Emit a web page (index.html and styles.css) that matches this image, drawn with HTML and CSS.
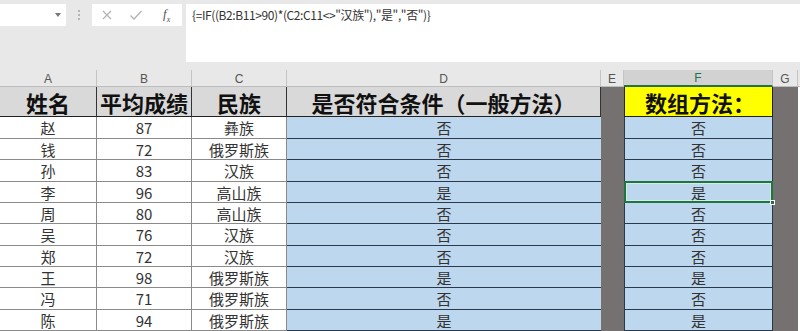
FILE: index.html
```html
<!DOCTYPE html>
<html lang="zh">
<head>
<meta charset="utf-8">
<link rel="stylesheet" href="styles.css">
</head>
<body>
<div class="top">
  <div class="namebox"><span class="caret"></span></div>
  <div class="dots"><i></i><i></i><i></i></div>
  <div class="fxbox">
    <svg class="ic" width="12" height="12" viewBox="0 0 12 12"><path d="M2 2 L10 10 M10 2 L2 10" stroke="#b3b3b3" stroke-width="1.3" fill="none"/></svg>
    <svg class="ic" width="14" height="12" viewBox="0 0 14 12"><path d="M1.5 6.5 L5 10 L12.5 2" stroke="#b3b3b3" stroke-width="1.3" fill="none"/></svg>
    <span class="fx">f<sub>x</sub></span>
  </div>
  <div class="formula">{=IF((B2:B11&gt;90)*(C2:C11&lt;&gt;"汉族"),"是","否")}</div>
</div>
<div class="sheet">
  <div class="ch">A</div><div class="ch">B</div><div class="ch">C</div><div class="ch">D</div><div class="ch">E</div><div class="ch sel">F</div><div class="ch">G</div><div class="ch last"></div>

  <div class="h">姓名</div><div class="h">平均成绩</div><div class="h">民族</div><div class="h">是否符合条件（一般方法）</div><div class="dk"></div><div class="y">数组方法：</div><div class="dk"></div><div class="rest"></div>

  <div class="w">赵</div><div class="w">87</div><div class="w">彝族</div><div class="b">否</div><div class="dk"></div><div class="b f">否</div><div class="dk"></div><div class="rest"></div>
  <div class="w">钱</div><div class="w">72</div><div class="w">俄罗斯族</div><div class="b">否</div><div class="dk"></div><div class="b f">否</div><div class="dk"></div><div class="rest"></div>
  <div class="w">孙</div><div class="w">83</div><div class="w">汉族</div><div class="b">否</div><div class="dk"></div><div class="b f">否</div><div class="dk"></div><div class="rest"></div>
  <div class="w">李</div><div class="w">96</div><div class="w">高山族</div><div class="b">是</div><div class="dk"></div><div class="b f active">是<span class="handle"></span></div><div class="dk"></div><div class="rest"></div>
  <div class="w">周</div><div class="w">80</div><div class="w">高山族</div><div class="b">否</div><div class="dk"></div><div class="b f">否</div><div class="dk"></div><div class="rest"></div>
  <div class="w">吴</div><div class="w">76</div><div class="w">汉族</div><div class="b">否</div><div class="dk"></div><div class="b f">否</div><div class="dk"></div><div class="rest"></div>
  <div class="w">郑</div><div class="w">72</div><div class="w">汉族</div><div class="b">否</div><div class="dk"></div><div class="b f">否</div><div class="dk"></div><div class="rest"></div>
  <div class="w">王</div><div class="w">98</div><div class="w">俄罗斯族</div><div class="b">是</div><div class="dk"></div><div class="b f">是</div><div class="dk"></div><div class="rest"></div>
  <div class="w">冯</div><div class="w">71</div><div class="w">俄罗斯族</div><div class="b">否</div><div class="dk"></div><div class="b f">否</div><div class="dk"></div><div class="rest"></div>
  <div class="w">陈</div><div class="w">94</div><div class="w">俄罗斯族</div><div class="b">是</div><div class="dk"></div><div class="b f">是</div><div class="dk"></div><div class="rest"></div>
</div>
</body>
</html>
```
FILE: styles.css
```css
* { box-sizing: border-box; }
html, body { margin: 0; padding: 0; }
body {
  width: 800px;
  height: 331px;
  overflow: hidden;
  background: #e8e8e8;
  font-family: "Noto Sans CJK SC", "Noto Sans", sans-serif;
  color: #333;
}
.top {
  height: 70px;
  display: flex;
  align-items: flex-start;
  padding-top: 4px;
  background: #e8e8e8;
}
.namebox {
  width: 66px;
  height: 22px;
  background: #fff;
  display: flex;
  align-items: center;
  justify-content: flex-end;
  padding-right: 5px;
}
.caret {
  width: 0; height: 0;
  border-left: 3.5px solid transparent;
  border-right: 3.5px solid transparent;
  border-top: 4px solid #777;
}
.dots {
  width: 26px;
  height: 22px;
  display: flex;
  flex-direction: column;
  align-items: center;
  justify-content: center;
  gap: 2px;
}
.dots i {
  display: block;
  width: 2px; height: 2px;
  background: #b5b5b5;
}
.fxbox {
  width: 90px;
  height: 22px;
  background: #fff;
  display: flex;
  align-items: center;
  padding-left: 9px;
  gap: 16px;
  margin-right: 4px;
}
.fx {
  font-family: "Liberation Serif", serif;
  font-style: italic;
  font-size: 13px;
  color: #555;
  margin-left: 4px;
}
.fx sub { font-size: 8px; }
.formula {
  flex: 1;
  height: 58px;
  background: #fff;
  font-size: 12px;
  line-height: 14px;
  letter-spacing: -0.4px;
  padding: 4px 6px;
  color: #333;
}
.sheet {
  display: grid;
  grid-template-columns: 97px 95px 95px 314px 23px 149px 25px 1fr;
  grid-template-rows: 17px 30px 22px 21px 22px 21px 21px 22px 21px 21px 22px 21px;
}
.sheet > div {
  display: flex;
  align-items: center;
  justify-content: center;
  border-right: 1px solid #8a8a8a;
  border-bottom: 1px solid #8a8a8a;
  white-space: nowrap;
}
.sheet > .ch {
  background: #e8e8e8;
  font-family: "Liberation Sans", sans-serif;
  font-size: 12px;
  color: #555;
  border-right: 1px solid #c4c4c4;
  border-bottom: 1px solid #bdbdbd;
  padding-top: 1px;
}
.sheet > .ch.sel {
  background: #d2d2d2;
  color: #217346;
  border-bottom: 2px solid #217346;
}
.sheet > .ch.last { border-right: none; }
.sheet > .h {
  background: #d9d9d9;
  font-weight: bold;
  font-size: 22px;
  color: #111;
  border-right: 1px solid #333;
  border-bottom: 1px solid #222;
}
.sheet > .y {
  background: #ffff00;
  font-weight: bold;
  font-size: 22px;
  color: #111;
  border: 1px solid #222;
  border-top: none;
  padding-left: 3px;
}
.sheet > .dk {
  background: #757171;
  border-right: none;
  border-bottom: none;
}
.sheet > .rest {
  background: #fff;
  border: none;
}
.sheet > .w {
  background: #fff;
  font-size: 15px;
  color: #333;
}
.sheet > .b {
  background: #bdd7ee;
  font-size: 15px;
  color: #333;
  border-right: none;
  border-bottom: 1px solid #2b3a4a;
}
.sheet > .b.f {
  border-left: 1px solid #2b3a4a;
  border-right: 1px solid #2b3a4a;
}
.sheet > .b.f.active {
  position: relative;
  box-shadow: inset 0 0 0 1px #cfeedd;
  border: 2px solid #217346;
  margin-top: -1px;
}
.handle {
  position: absolute;
  right: -4px;
  bottom: -4px;
  width: 5px;
  height: 5px;
  background: #217346;
  border: 1px solid #fff;
}
```
